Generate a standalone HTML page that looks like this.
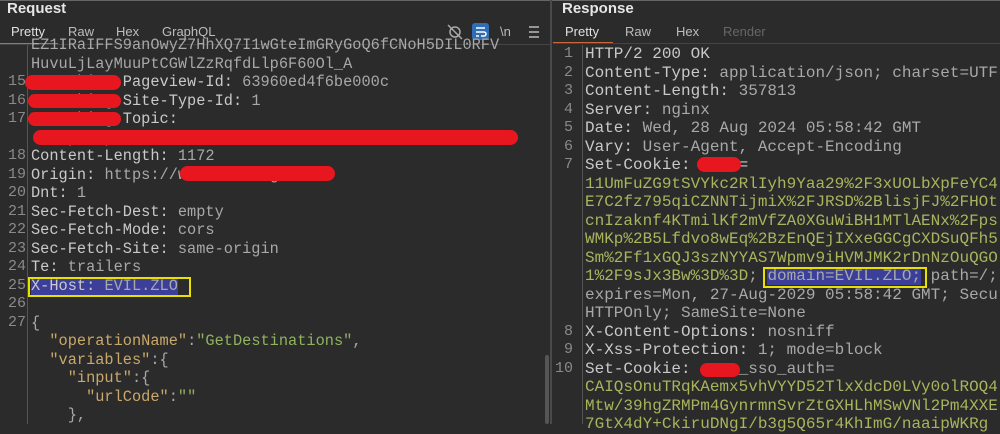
<!DOCTYPE html>
<html><head><meta charset="utf-8"><style>
*{margin:0;padding:0;box-sizing:border-box}
body{width:1000px;height:424px;background:#2b2b2b;overflow:hidden;position:relative;font-family:"Liberation Mono",monospace}
.h{position:absolute;font-family:"Liberation Sans",sans-serif;font-weight:bold;color:#e6e6e6;font-size:15px}
.t{position:absolute;font-family:"Liberation Sans",sans-serif;font-size:13px;color:#bdbdbd}
.l{position:absolute;font-size:15.3px;line-height:18.5px;white-space:pre;color:#c9c9c9}
.n{position:absolute;font-size:15px;line-height:18.5px;color:#8a8a8a;text-align:right}
.R{font-size:16px}
.v{color:#a8a8a8}.g{color:#a9b45c}.k{color:#c9a86a}.s{color:#8fb35e}
.r{position:absolute;background:#e8171f;border-radius:9px}
.box{position:absolute;border:2px solid #e8e000}
.sel{background:#3b3f9a}
</style></head><body>
<div style="position:absolute;left:0;top:0;width:1000px;height:1px;background:#666"></div>
<div class="h" style="left:7px;top:0px">Request</div>
<div class="h" style="left:562px;top:0px">Response</div>
<div style="position:absolute;left:550px;top:0;width:2px;height:424px;background:#4a4a4a"></div>
<div class="t" style="left:11px;top:24px;color:#e0e0e0">Pretty</div>
<div class="t" style="left:68px;top:24px">Raw</div>
<div class="t" style="left:116px;top:24px">Hex</div>
<div class="t" style="left:162px;top:24px">GraphQL</div>
<div style="position:absolute;left:0;top:43px;width:58px;height:2px;background:#c8683a"></div>
<div style="position:absolute;left:0;top:44px;width:550px;height:1px;background:#444"></div>
<div class="t" style="left:565px;top:24px;color:#e0e0e0">Pretty</div>
<div class="t" style="left:625px;top:24px">Raw</div>
<div class="t" style="left:676px;top:24px">Hex</div>
<div class="t" style="left:723px;top:24px;color:#666">Render</div>
<div style="position:absolute;left:553px;top:42px;width:60px;height:2px;background:#c8683a"></div>
<div style="position:absolute;left:553px;top:43px;width:447px;height:1px;background:#444"></div>
<svg style="position:absolute;left:445px;top:23px" width="100" height="18">
<circle cx="10" cy="9" r="5" fill="none" stroke="#aaa" stroke-width="1.5"/><line x1="3" y1="2" x2="17" y2="16" stroke="#aaa" stroke-width="1.5"/>
<rect x="27" y="0" width="17" height="17" rx="3" fill="#2f6db5"/><path d="M31 5h9M31 9h8a2 2 0 0 1 0 4h-3M31 13h3" stroke="#fff" stroke-width="1.5" fill="none"/>
<text x="55" y="13" fill="#bbb" font-size="13" font-family="Liberation Sans">\n</text>
<path d="M84 4h10M84 9h10M84 14h10" stroke="#bbb" stroke-width="1.5"/>
</svg>
<div style="position:absolute;left:27px;top:45px;width:1px;height:379px;background:#555"></div>
<div style="position:absolute;left:582px;top:45px;width:1px;height:379px;background:#555"></div>
<div style="position:absolute;left:545px;top:355px;width:4px;height:69px;background:#555;border-radius:2px"></div>

<div class="n" style="left:0;top:73px;width:26px">15<br>16<br>17<br><br>18<br>19<br>20<br>21<br>22<br>23<br>24<br>25<br>26<br>27</div>
<div class="l v" style="left:31px;top:36px">EZ1IRaIFFS9anOwyZ7HhXQ7I1wGteImGRyGoQ6fCNoH5DIL0RFV
HuvuLjLayMuuPtCGWlZzRqfdLlp6F60Ol_A</div>
<div class="l" style="left:31px;top:73px">X-Booking-Pageview-Id: <span class="v">63960ed4f6be000c</span>
X-Booking-Site-Type-Id: <span class="v">1</span>
X-Booking-Topic:
<span class="v">  capla_product_frontend_destinations</span>
Content-Length: <span class="v">1172</span>
Origin: <span class="v">https://www.booking.com</span>
Dnt: <span class="v">1</span>
Sec-Fetch-Dest: <span class="v">empty</span>
Sec-Fetch-Mode: <span class="v">cors</span>
Sec-Fetch-Site: <span class="v">same-origin</span>
Te: <span class="v">trailers</span>
<span class="sel">X-Host: <span class="v">EVIL.ZLO</span></span>

<span class="v">{</span>
  <span class="k">"operationName"</span><span class="v">:</span><span class="s">"GetDestinations"</span><span class="v">,</span>
  <span class="k">"variables"</span><span class="v">:{</span>
    <span class="k">"input"</span><span class="v">:{</span>
      <span class="k">"urlCode"</span><span class="v">:</span><span class="s">""</span>
    <span class="v">},</span></div>
<div class="box" style="left:28px;top:277px;width:163px;height:20px"></div>
<div class="r" style="left:25px;top:75px;width:96px;height:15px"></div>
<div class="r" style="left:28px;top:94px;width:93px;height:14px"></div>
<div class="r" style="left:28px;top:112px;width:93px;height:14px"></div>
<div class="r" style="left:33px;top:130px;width:485px;height:15px"></div>
<div class="r" style="left:180px;top:166px;width:155px;height:15px"></div>

<div class="n" style="left:553px;top:45px;width:20px">1<br>2<br>3<br>4<br>5<br>6<br>7<br><br><br><br><br><br><br><br><br>8<br>9<br>10</div>
<div class="l R" style="left:585px;top:45px">HTTP/2 200 OK
Content-Type: <span class="v">application/json; charset=UTF-8</span>
Content-Length: <span class="v">357813</span>
Server: <span class="v">nginx</span>
Date: <span class="v">Wed, 28 Aug 2024 05:58:42 GMT</span>
Vary: <span class="v">User-Agent, Accept-Encoding</span>
Set-Cookie:     =
<span class="g">11UmFuZG9tSVYkc2RlIyh9Yaa29%2F3xUOLbXpFeYC4</span>
<span class="g">E7C2fz795qiCZNNTijmiX%2FJRSD%2BlisjFJ%2FHOt</span>
<span class="g">cnIzaknf4KTmilKf2mVfZA0XGuWiBH1MTlAENx%2Fps</span>
<span class="g">WMKp%2B5Lfdvo8wEq%2BzEnQEjIXxeGGCgCXDSuQFh5</span>
<span class="g">Sm%2Ff1xGQJ3szNYYAS7Wpmv9iHVMJMK2rDnNzOuQGO</span>
<span class="g">1%2F9sJx3Bw%3D%3D</span><span class="v">; <span class="sel">domain=EVIL.ZLO;</span> path=/;</span>
<span class="v">expires=Mon, 27-Aug-2029 05:58:42 GMT; Secure;</span>
<span class="v">HTTPOnly; SameSite=None</span>
X-Content-Options: <span class="v">nosniff</span>
X-Xss-Protection: <span class="v">1; mode=block</span>
Set-Cookie:     <span class="v">_sso_auth=</span>
<span class="g">CAIQsOnuTRqKAemx5vhVYYD52TlxXdcD0LVy0olROQ4</span>
<span class="g">Mtw/39hgZRMPm4GynrmnSvrZtGXHLhMSwVNl2Pm4XXE</span>
<span class="g">7GtX4dY+CkiruDNgI/b3g5Q65r4KhImG/naaipWKRg</span></div>
<div class="box" style="left:763px;top:267px;width:164px;height:21px"></div>
<div class="r" style="left:697px;top:157px;width:44px;height:15px"></div>
<div class="r" style="left:700px;top:363px;width:40px;height:14px"></div>
</body></html>
